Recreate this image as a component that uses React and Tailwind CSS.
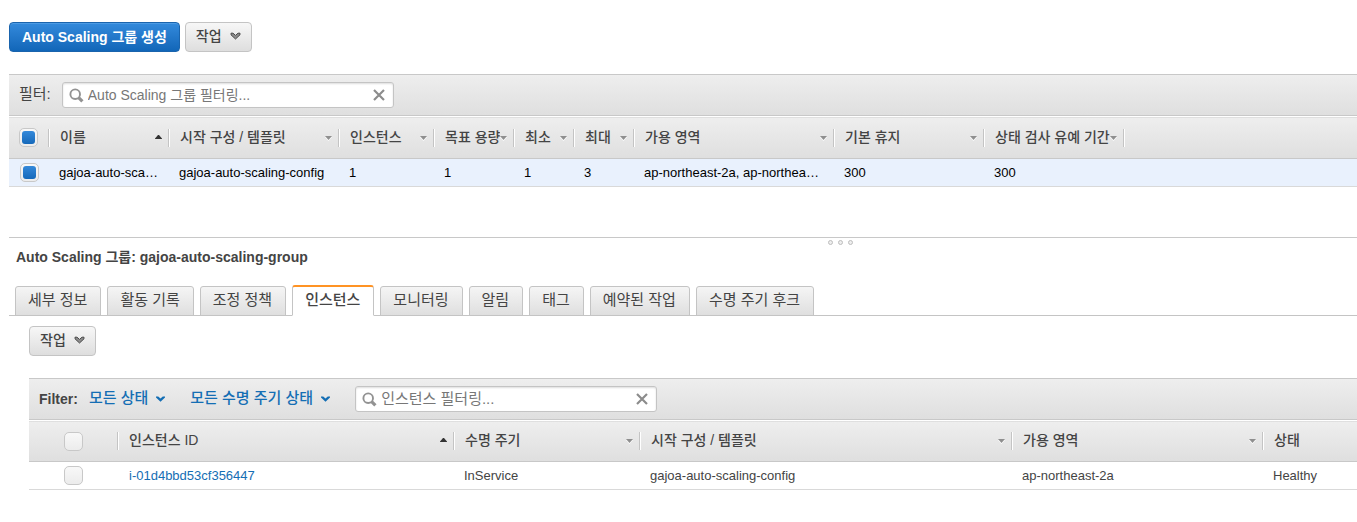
import React from "react";
import clsx from "clsx";

const groupColumns = [
  { label: "이름", width: "w-[120px]", sort: "up" },
  { label: "시작 구성 / 템플릿", width: "w-[170px]", sort: "down" },
  { label: "인스턴스", width: "w-[95px]", sort: "down" },
  { label: "목표 용량", width: "w-20", sort: "down" },
  { label: "최소", width: "w-[60px]", sort: "down" },
  { label: "최대", width: "w-[60px]", sort: "down" },
  { label: "가용 영역", width: "w-[200px]", sort: "down" },
  { label: "기본 휴지", width: "w-[150px]", sort: "down" },
  { label: "상태 검사 유예 기간", width: "w-[140px]", sort: "down" },
];

const groupRow = [
  "gajoa-auto-scaling-group",
  "gajoa-auto-scaling-config",
  "1",
  "1",
  "1",
  "3",
  "ap-northeast-2a, ap-northeast-2c",
  "300",
  "300",
];

const instanceColumns = [
  { label: "인스턴스 ID", width: "w-[336px]", sort: "up" },
  { label: "수명 주기", width: "w-[186px]", sort: "down" },
  { label: "시작 구성 / 템플릿", width: "", sort: "down" },
  { label: "가용 영역", width: "w-[251px]", sort: "down" },
  { label: "상태", width: "w-[94px]", sort: null },
];

const tabs = [
  "세부 정보",
  "활동 기록",
  "조정 정책",
  "인스턴스",
  "모니터링",
  "알림",
  "태그",
  "예약된 작업",
  "수명 주기 후크",
];

const barStyle = "bg-linear-to-b from-[#eeeeee] to-[#dfdfdf]";

function ActionChevron() {
  return (
    <svg width="11" height="8" viewBox="0 0 11 8" aria-hidden="true">
      <path d="M1 1.2 H3 L5.5 3.4 L8 1.2 H10 V2.8 L5.5 7 L1 2.8 Z" fill="#8c8c8c" stroke="#4a4a4a" strokeWidth="1" />
    </svg>
  );
}

function LinkChevron() {
  return (
    <svg width="9" height="6" viewBox="0 0 9 6" aria-hidden="true">
      <path d="M0 0.5 H2.2 L4.5 2.6 L6.8 0.5 H9 V1.4 L4.5 5.8 L0 1.4 Z" fill="#146eb4" />
    </svg>
  );
}

function SortArrow({ direction }) {
  if (direction === "up") {
    return (
      <svg className="shrink-0" width="7" height="6" viewBox="0 0 7 6" aria-hidden="true">
        <path d="M3 0 H4 L7 3.4 V4 H0 V3.4 Z" fill="#333" />
      </svg>
    );
  }
  return (
    <svg className="shrink-0" width="7" height="6" viewBox="0 0 7 6" aria-hidden="true">
      <path d="M0 2 H7 L3.5 6 Z" fill="#fff" />
      <path d="M0 1 H7 L3.5 5 Z" fill="#8f8f8f" />
    </svg>
  );
}

function ActionButton() {
  return (
    <button
      type="button"
      className="flex h-[30px] items-center gap-2 rounded-[4px] border border-[#c4c4c4] bg-linear-to-b from-[#f7f7f7] to-[#dedede] px-[10px] pb-[2px] text-[14px] font-medium text-[#444]"
    >
      작업
      <ActionChevron />
    </button>
  );
}

function CheckBox({ label, checked = false }) {
  return (
    <input
      type="checkbox"
      aria-label={label}
      defaultChecked={checked}
      className="grid size-[19px] appearance-none place-content-center rounded-[5px] border border-[#c8c8c8] bg-linear-to-b from-[#f8f8f8] to-[#ececec] checked:before:block checked:before:size-[13px] checked:before:rounded-[3px] checked:before:bg-linear-to-b checked:before:from-[#3489da] checked:before:to-[#1569ba]"
    />
  );
}

function SearchBox({ placeholder, className, textSize }) {
  return (
    <div
      className={clsx(
        "flex h-[26px] items-center rounded-[3px] border border-[#c4c4c4] bg-white pr-2 pl-[6px] shadow-[inset_0_1px_2px_#ddd]",
        className
      )}
    >
      <svg className="shrink-0" width="15" height="15" viewBox="0 0 15 15" fill="none" stroke="#929292" aria-hidden="true">
        <circle cx="6.2" cy="6.2" r="4.8" strokeWidth="1.9" />
        <path d="M9.6 9.6 L13.4 13.4" strokeWidth="3.2" />
      </svg>
      <input
        type="text"
        aria-label={placeholder}
        placeholder={placeholder}
        className={clsx("min-w-0 flex-1 pl-1 leading-5 text-[#444] outline-none placeholder:text-[#777]", textSize)}
      />
      <button type="button" aria-label="지우기" className="shrink-0">
        <svg width="12" height="12" viewBox="0 0 12 12" fill="none" stroke="#8c8c8c" strokeWidth="2.2" aria-hidden="true">
          <path d="M1 1 L11 11 M11 1 L1 11" />
        </svg>
      </button>
    </div>
  );
}

function HeaderCell({ column }) {
  return (
    <th scope="col" className={clsx("p-0", column.width)}>
      <div className="flex items-center">
        <span className="min-w-0 flex-1 overflow-hidden pb-[2px] pl-[11px] text-left text-[14px] leading-5 font-medium whitespace-nowrap">
          {column.label}
        </span>
        {column.sort && (
          <span className="flex h-[18px] items-center border-r border-[#c4c4c4] pr-[6px] shadow-[1px_0_0_#fff]">
            <SortArrow direction={column.sort} />
          </span>
        )}
      </div>
    </th>
  );
}

function SelectAllCell({ label, checked, width, align }) {
  return (
    <th scope="col" className={clsx("p-0", width)}>
      <div className={clsx("flex items-center justify-between", align)}>
        <CheckBox label={label} checked={checked} />
        <span className="h-[18px] border-r border-[#c4c4c4] shadow-[1px_0_0_#fff]" />
      </div>
    </th>
  );
}

function GroupList() {
  return (
    <section className="ml-[9px]">
      <div className={clsx("flex h-[42px] items-center gap-[11px] border-y border-[#c8c8c8] pl-[10px]", barStyle)}>
        <span className="pb-[2px] text-[15px]">필터:</span>
        <SearchBox placeholder="Auto Scaling 그룹 필터링..." className="w-[332px]" textSize="text-[14px]" />
      </div>
      <table className="w-full table-fixed border-collapse">
        <thead>
          <tr className={clsx("h-[42px] border-t border-b border-t-white border-b-[#c8c8c8]", barStyle)}>
            <SelectAllCell label="모든 그룹 선택" checked width="w-10" align="pl-[10px]" />
            {groupColumns.map((column) => (
              <HeaderCell key={column.label} column={column} />
            ))}
            <th className="p-0" />
          </tr>
        </thead>
        <tbody>
          <tr className="h-7 border-b border-[#d9d9d9] bg-[#e9f1fd] text-[13px] leading-5 text-black">
            <td className="p-0 pl-[11px]">
              <CheckBox label="gajoa-auto-scaling-group 선택" checked />
            </td>
            {groupRow.map((value, index) => (
              <td key={groupColumns[index].label} className="truncate p-0 pr-[10px] pl-[10px]">
                {value}
              </td>
            ))}
            <td className="p-0" />
          </tr>
        </tbody>
      </table>
    </section>
  );
}

function Splitter() {
  return (
    <div className="mt-[50px] ml-[9px] flex h-2 items-end justify-center gap-[5px] border-t border-[#c8c8c8] pl-[314px]">
      {[0, 1, 2].map((dot) => (
        <span key={dot} className="size-[5px] rounded-full border border-[#bdbdbd] bg-[#eee]" />
      ))}
    </div>
  );
}

function TabBar() {
  return (
    <div role="tablist" className="ml-[9px] flex h-[31px] items-end gap-[6px] pl-[6px] shadow-[inset_0_-1px_0_#c4c4c4]">
      {tabs.map((tab) => {
        const active = tab === "인스턴스";
        return (
          <button
            key={tab}
            type="button"
            role="tab"
            aria-selected={active}
            className={clsx(
              "rounded-t-[3px] border border-[#c4c4c4] pr-[13px] pb-[2px] pl-3 text-[15px] whitespace-nowrap text-[#444]",
              active
                ? "h-[31px] border-t-2 border-t-[#ff9324] border-b-white bg-white font-medium"
                : "h-[30px] bg-linear-to-b from-[#f5f5f5] to-[#dfdfdf]"
            )}
          >
            {tab}
          </button>
        );
      })}
    </div>
  );
}

function FilterMenu({ label }) {
  return (
    <button type="button" className="flex items-center gap-2 pb-[1px] text-[15px] font-medium text-[#146eb4]">
      {label}
      <LinkChevron />
    </button>
  );
}

function InstanceList() {
  return (
    <section className="ml-[29px]">
      <div className={clsx("flex h-[42px] items-center border-y border-[#c8c8c8] pl-[10px]", barStyle)}>
        <span className="mr-[11px] text-[14px] font-bold">Filter:</span>
        <div className="flex items-center gap-[25px]">
          <FilterMenu label="모든 상태" />
          <FilterMenu label="모든 수명 주기 상태" />
          <SearchBox placeholder="인스턴스 필터링..." className="w-[302px]" textSize="text-[15px]" />
        </div>
      </div>
      <table className="w-full table-fixed border-collapse">
        <thead>
          <tr className={clsx("h-[41px] border-t border-b border-t-white border-b-[#c8c8c8]", barStyle)}>
            <SelectAllCell label="모든 인스턴스 선택" width="w-[89px]" align="pl-[35px]" />
            {instanceColumns.map((column) => (
              <HeaderCell key={column.label} column={column} />
            ))}
          </tr>
        </thead>
        <tbody>
          <tr className="h-7 border-b border-[#d9d9d9] text-[13px] leading-5">
            <td className="p-0 pl-[35px]">
              <CheckBox label="i-01d4bbd53cf356447 선택" />
            </td>
            <td className="truncate p-0 pl-[11px]">
              <a href="#instance" className="text-[#146eb4]">
                i-01d4bbd53cf356447
              </a>
            </td>
            <td className="truncate p-0 pl-[10px]">InService</td>
            <td className="truncate p-0 pl-[10px]">gajoa-auto-scaling-config</td>
            <td className="truncate p-0 pl-[10px]">ap-northeast-2a</td>
            <td className="truncate p-0 pl-[10px]">Healthy</td>
          </tr>
        </tbody>
      </table>
    </section>
  );
}

export default function App() {
  return (
    <main className="bg-white pt-[22px] pb-8 font-['Liberation_Sans','Noto_Sans_CJK_KR',sans-serif] text-[#444]">
      <div className="mb-[22px] ml-[9px] flex gap-[5px]">
        <button
          type="button"
          className="h-[30px] rounded-[4px] border border-[#1a64ad] bg-linear-to-b from-[#338adc] to-[#1166b8] px-3 text-[14px] font-bold text-white shadow-[inset_0_1px_0_#4c9be4]"
        >
          Auto Scaling 그룹 생성
        </button>
        <ActionButton />
      </div>
      <GroupList />
      <Splitter />
      <h2 className="mt-[2px] mb-[18px] ml-4 text-[14px] leading-5 font-bold">
        Auto Scaling 그룹: gajoa-auto-scaling-group
      </h2>
      <TabBar />
      <div className="mt-[10px] mb-[22px] ml-[29px] flex">
        <ActionButton />
      </div>
      <InstanceList />
    </main>
  );
}
